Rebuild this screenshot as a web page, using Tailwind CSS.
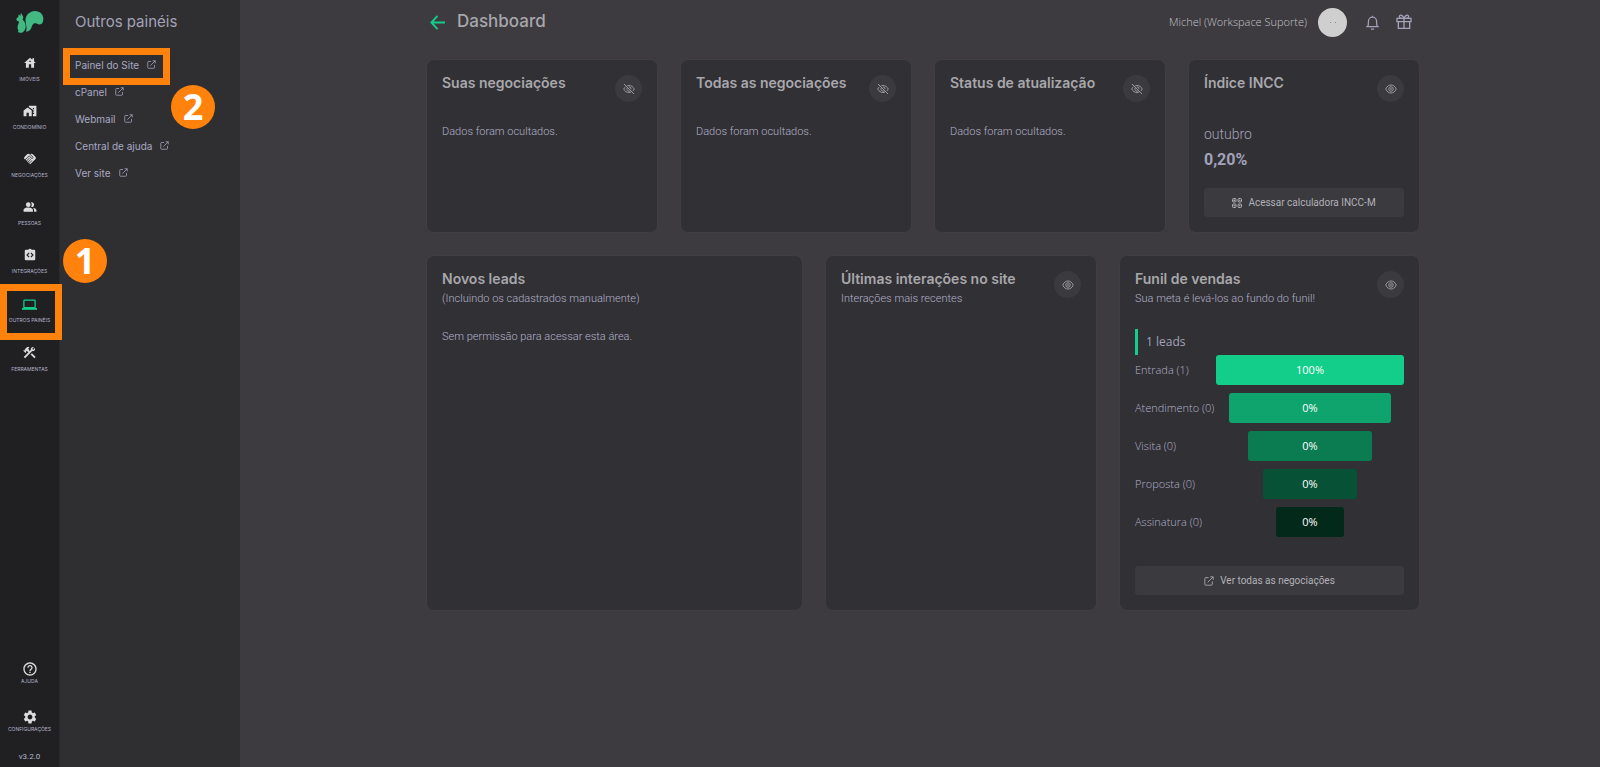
<!DOCTYPE html>
<html lang="pt-BR">

<head>
  <meta charset="UTF-8">
  <meta name="viewport" content="width=device-width, initial-scale=1.0">
  <title>Dashboard</title>
  <script src="https://cdn.jsdelivr.net/npm/@tailwindcss/browser@4"></script>
</head>

<body class="flex min-h-screen bg-[#3d3b40] font-[Roboto,sans-serif] text-[11px] text-[#a3a2b8]">
  <!-- shared icons -->
  <svg class="hidden">
    <symbol id="external" viewBox="0 0 24 24" fill="none" stroke="currentColor" stroke-width="2">
      <path d="M11 4H4a2 2 0 0 0-2 2v14a2 2 0 0 0 2 2h14a2 2 0 0 0 2-2v-7M9 15 22 2M15 2h7v7" />
    </symbol>
    <symbol id="eye" viewBox="0 0 24 24" fill="none" stroke="currentColor" stroke-width="2">
      <path d="M1.500 12C4 6 8 4 12 4s8 2 10.500 8C20 18 16 20 12 20S4 18 1.500 12z" />
      <circle cx="12" cy="12" r="4.500" />
      <circle cx="12" cy="12" r="1" />
    </symbol>
    <symbol id="eye-off" viewBox="0 0 24 24" fill="none" stroke="currentColor" stroke-width="2">
      <path d="M8.500 5.500A11 11 0 0 1 12 5c4.500 0 8.500 2.500 10.500 7a13 13 0 0 1-3 4.200M16 18.200a11 11 0 0 1-4 .8c-4.500 0-8.500-2.500-10.500-7a13 13 0 0 1 3.700-4.700M2 2l20 20M8.500 9.500a4.500 4.500 0 0 0 6.500 6M11.500 7.800a4.500 4.500 0 0 1 4.700 4.700" />
    </symbol>
  </svg>

  <nav class="flex w-[60px] shrink-0 flex-col border-r border-[#2a2a2c] bg-[#202022] font-[Inter,sans-serif] text-[5px] leading-[8px] uppercase text-[#b4b4cc]">
    <a href="#" aria-label="Início" class="flex h-12 justify-center pt-[10px]">
      <svg class="h-6 w-7" viewBox="47 30 84 72" fill="#42b883">
        <path d="M77 95C81 84 77 76 76 66 73 48 86 33 104 33c15 0 25 11 25 23 0 8-2 13-6 16-4 2-8 2-13-1-5-2-10-1-13 3-4 5-3 11-8 16-4 4-8 5-12 5z" />
        <path d="M62 38l4 8c4 4 3 9 1 13 6 5 10 13 9 22-1 8-5 15-11 17-6 1-10 0-12-2-1-2 1-2 2-3-3-5-4-10-3-15 1-5 4-9 4-13-2-2-6-2-8-5 0-5 3-7 6-9l1-8 5 4z" />
      </svg>
    </a>
    <a href="#" class="flex h-12 flex-col items-center gap-[5px] pt-[8px]">
      <svg class="size-[14px]" viewBox="0 0 24 24" fill="#dcdcdc"><path d="M19 9.300V4h-3v2.600L12 3 2 12h3v8h5v-6h4v6h5v-8h3l-3-2.700zm-9 .7c0-1.100.9-2 2-2s2 .9 2 2h-4z" /></svg>
      Imóveis
    </a>
    <a href="#" class="flex h-12 flex-col items-center gap-[5px] pt-[8px]">
      <svg class="size-[14px]" viewBox="0 0 24 24" fill="#dcdcdc"><path d="M1 11v10h5v-6h4v6h5V11L8 6z" /><path d="M10 3v1.970l7 5V11h2v2h-2v2h2v2h-2v4h6V3H10zm9 6h-2V7h2v2z" /></svg>
      Condomínio
    </a>
    <a href="#" class="flex h-12 flex-col items-center gap-[5px] pt-[8px]">
      <svg class="size-[14px]" viewBox="0 0 24 24" fill="#dcdcdc"><path d="M16.480 10.410c-.39.39-1.040.39-1.430 0l-4.470-4.460-7.050 7.040-.66-.63c-1.170-1.170-1.170-3.070 0-4.240l4.240-4.240c1.170-1.170 3.070-1.170 4.240 0L16.480 9c.39.39.39 1.020 0 1.410zm.7-2.120c.78.78.78 2.050 0 2.830-1.270 1.270-2.610.22-2.830 0l-3.760-3.760-5.570 5.570c-.39.39-.39 1.020 0 1.410s1.020.39 1.420 0l4.620-4.620.71.71-4.620 4.620c-.39.39-.39 1.020 0 1.410s1.020.39 1.420 0l4.620-4.620.71.71-4.620 4.620c-.39.39-.39 1.020 0 1.410s1.020.39 1.410 0l4.620-4.620.71.71-4.620 4.620c-.39.39-.39 1.020 0 1.410s1.020.39 1.410 0l8.320-8.340c1.170-1.170 1.170-3.070 0-4.240l-4.240-4.240c-1.150-1.150-3.010-1.170-4.180-.06l4.470 4.470z" /></svg>
      Negociações
    </a>
    <a href="#" class="flex h-12 flex-col items-center gap-[5px] pt-[8px]">
      <svg class="size-[14px]" viewBox="0 0 24 24" fill="#dcdcdc"><circle cx="9" cy="8" r="4" /><path d="M16.670 13.130C18.040 14.060 19 15.320 19 17v3h4v-3c0-2.180-3.570-3.470-6.330-3.870zM15 12c2.210 0 4-1.790 4-4s-1.790-4-4-4c-.47 0-.91.1-1.330.24C14.500 5.270 15 6.580 15 8s-.5 2.730-1.330 3.760c.42.14.86.24 1.330.24zM9 13c-2.670 0-8 1.340-8 4v3h16v-3c0-2.660-5.330-4-8-4z" /></svg>
      Pessoas
    </a>
    <a href="#" class="flex h-12 flex-col items-center gap-[5px] pt-[8px]">
      <svg class="size-[14px]" viewBox="0 0 24 24" fill="#dcdcdc"><path d="M5 3h4.200a3 3 0 0 1 5.600 0H19a2 2 0 0 1 2 2v14a2 2 0 0 1-2 2H5a2 2 0 0 1-2-2V5a2 2 0 0 1 2-2z" /><path d="M10.500 8.500 7 12l3.500 3.500M13.500 8.500 17 12l-3.500 3.500" fill="none" stroke="#202022" stroke-width="2" /></svg>
      Integrações
    </a>
    <a href="#" class="relative flex h-12 flex-col items-center gap-[4px] pt-[9px]">
      <svg class="size-[15px]" viewBox="0 0 24 24" fill="none" stroke="#12ce8a" stroke-width="2"><rect x="3" y="5" width="18" height="12" rx="1" /><path d="M0 19h24" stroke-width="3" /></svg>
      Outros painéis
      <!-- step 1 marker -->
      <span class="absolute -top-1 left-0 h-14 w-[62px] border-[7px] border-[#ff820c]"></span>
      <span class="absolute -top-[49px] left-[63px] flex size-11 items-center justify-center rounded-full bg-[#ff820c] font-['Open_Sans',sans-serif] text-[36px] font-bold text-white">1</span>
    </a>
    <a href="#" class="flex h-12 flex-col items-center gap-[5px] pt-[9px]">
      <svg class="size-[15px]" viewBox="0 0 24 24" fill="#dcdcdc"><path d="M13.780 15.170l2.120-2.120 6 6-2.120 2.120z" /><path d="M17.500 10c1.930 0 3.500-1.570 3.500-3.500 0-.58-.16-1.120-.41-1.600l-2.700 2.700-1.490-1.490 2.700-2.700c-.48-.25-1.020-.41-1.600-.41C15.570 3 14 4.570 14 6.500c0 .41.08.8.21 1.160l-1.850 1.850-1.780-1.780.71-.71-1.410-1.410L12 3.490c-1.170-1.170-3.070-1.170-4.240 0L4.220 7.030l1.410 1.410H2.810l-.71.71 3.540 3.540.71-.71V9.150l1.410 1.410.71-.71 1.780 1.780-7.410 7.410 2.120 2.120L16.340 9.790c.36.13.75.21 1.160.21z" /></svg>
      Ferramentas
    </a>

    <div class="mt-auto flex flex-col">
      <a href="#" class="flex h-12 flex-col items-center">
        <svg class="size-4" viewBox="0 0 24 24" fill="#dcdcdc"><path d="M11 18h2v-2h-2v2zm1-16C6.480 2 2 6.480 2 12s4.480 10 10 10 10-4.480 10-10S17.520 2 12 2zm0 18c-4.410 0-8-3.590-8-8s3.590-8 8-8 8 3.590 8 8-3.590 8-8 8zm0-14c-2.210 0-4 1.790-4 4h2c0-1.100.9-2 2-2s2 .9 2 2c0 2-3 1.750-3 5h2c0-2.250 3-2.500 3-5 0-2.210-1.790-4-4-4z" /></svg>
        Ajuda
      </a>
      <a href="#" class="flex h-[42px] flex-col items-center">
        <svg class="size-4" viewBox="0 0 24 24" fill="#dcdcdc"><path d="M19.140 12.940c.04-.3.06-.61.06-.94 0-.32-.02-.64-.07-.94l2.030-1.580c.18-.14.23-.41.12-.61l-1.920-3.320c-.12-.22-.37-.29-.59-.22l-2.390.96c-.5-.38-1.030-.7-1.620-.94l-.36-2.540c-.04-.24-.24-.41-.48-.41h-3.840c-.24 0-.43.17-.47.41l-.36 2.540c-.59.24-1.130.57-1.620.94l-2.390-.96c-.22-.08-.47 0-.59.22L2.740 8.870c-.12.21-.08.47.12.61l2.030 1.580c-.05.3-.09.63-.09.94s.02.64.07.94l-2.030 1.580c-.18.14-.23.41-.12.61l1.920 3.320c.12.22.37.29.59.22l2.390-.96c.5.38 1.030.7 1.620.94l.36 2.540c.05.24.24.41.48.41h3.840c.24 0 .44-.17.47-.41l.36-2.540c.59-.24 1.130-.56 1.620-.94l2.390.96c.22.08.47 0 .59-.22l1.920-3.320c.12-.22.07-.47-.12-.61l-2.010-1.580zM12 15.600c-1.980 0-3.600-1.620-3.600-3.600s1.620-3.600 3.600-3.600 3.600 1.620 3.600 3.600-1.620 3.600-3.600 3.600z" /></svg>
        Configurações
      </a>
      <span class="pb-1 text-center font-[Roboto,sans-serif] text-[8px] leading-[12px] normal-case">v3.2.0</span>
    </div>
  </nav>

  <aside class="w-[180px] shrink-0 bg-[#2f2f31] px-[15px] font-[Inter,sans-serif]">
    <h2 class="flex h-11 items-center text-[15px]">Outros painéis</h2>
    <ul class="mt-[8px] text-[10px] text-[#a9a8c4]">
      <li class="relative">
        <a href="#" class="flex h-[27px] items-center gap-2">Painel do Site <svg class="mb-[3px] size-[9px]"><use href="#external" /></svg></a>
        <!-- step 2 marker -->
        <span class="absolute -top-1 -left-3 h-[37px] w-[107px] border-[7px] border-[#ff820c]"></span>
        <span class="absolute top-[33px] left-24 flex size-11 items-center justify-center rounded-full bg-[#ff820c] font-['Open_Sans',sans-serif] text-[36px] font-bold text-white">2</span>
      </li>
      <li><a href="#" class="flex h-[27px] items-center gap-2">cPanel <svg class="mb-[3px] size-[9px]"><use href="#external" /></svg></a></li>
      <li><a href="#" class="flex h-[27px] items-center gap-2">Webmail <svg class="mb-[3px] size-[9px]"><use href="#external" /></svg></a></li>
      <li><a href="#" class="flex h-[27px] items-center gap-2">Central de ajuda <svg class="mb-[3px] size-[9px]"><use href="#external" /></svg></a></li>
      <li><a href="#" class="flex h-[27px] items-center gap-2">Ver site <svg class="mb-[3px] size-[9px]"><use href="#external" /></svg></a></li>
    </ul>
  </aside>

  <main class="min-w-0 flex-1 pl-[6px]">
    <div class="mx-auto max-w-[992px]">
      <header class="flex h-11 items-center pr-[7px]">
        <a href="#" aria-label="Voltar" class="pl-[3px]">
          <svg class="size-[15px]" viewBox="0 0 16 16" fill="none" stroke="#12ce8a" stroke-width="2"><path d="M16 8H2M8 1 1.500 8 8 15" /></svg>
        </a>
        <h1 class="ml-3 text-[17px] font-[Inter,sans-serif] font-medium text-[#a8a7ab]">Dashboard</h1>
        <span class="ml-auto font-['Open_Sans',sans-serif] text-[11px] font-light text-[#c4c3ca]">Michel (Workspace Suporte)</span>
        <span class="ml-[11px] flex size-[29px] items-center justify-center gap-1 rounded-full bg-[#cfcfcf]">
          <i class="size-px bg-[#888]"></i><i class="size-px bg-[#888]"></i>
        </span>
        <button aria-label="Notificações" class="ml-[18px]">
          <svg class="size-[15px]" viewBox="0 0 24 24" fill="none" stroke="currentColor" stroke-width="2"><path d="M2 18.500h20M4.500 18c1-2 1-4 1-8a6.500 6.500 0 0 1 13 0c0 4 0 6 1 8M9.500 22.500h5M12 1v2.500" /></svg>
        </button>
        <button aria-label="Novidades" class="ml-4">
          <svg class="size-4" viewBox="0 0 24 24" fill="none" stroke="currentColor" stroke-width="2"><path d="M1.500 6.500h21v5h-21zM3.500 11.500v10h17v-10M12 6.500v15M12 6.500C10 1 5 .5 5 4c0 2 3 2.500 7 2.500C14 1 19 .5 19 4c0 2-3 2.500-7 2.500z" /></svg>
        </button>
      </header>

      <div class="-mx-px mt-[15px] grid grid-cols-4 gap-[22px]">
        <section class="min-h-[174px] rounded-lg border border-[#403e43] bg-[#313035] p-[15px]">
          <div class="flex items-start justify-between">
            <h2 class="font-[Inter,sans-serif] text-[14px] leading-[16px] font-semibold text-[#a8a7ab]">Suas negociações</h2>
            <button aria-label="Mostrar" class="flex size-[27px] items-center justify-center rounded-full bg-[#3b3a3e] text-[#9a999f]"><svg class="size-3"><use href="#eye-off" /></svg></button>
          </div>
          <p class="mt-[22px] leading-[16px] font-light text-[#b2b1c8]">Dados foram ocultados.</p>
        </section>
        <section class="min-h-[174px] rounded-lg border border-[#403e43] bg-[#313035] p-[15px]">
          <div class="flex items-start justify-between">
            <h2 class="font-[Inter,sans-serif] text-[14px] leading-[16px] font-semibold text-[#a8a7ab]">Todas as negociações</h2>
            <button aria-label="Mostrar" class="flex size-[27px] items-center justify-center rounded-full bg-[#3b3a3e] text-[#9a999f]"><svg class="size-3"><use href="#eye-off" /></svg></button>
          </div>
          <p class="mt-[22px] leading-[16px] font-light text-[#b2b1c8]">Dados foram ocultados.</p>
        </section>
        <section class="min-h-[174px] rounded-lg border border-[#403e43] bg-[#313035] p-[15px]">
          <div class="flex items-start justify-between">
            <h2 class="font-[Inter,sans-serif] text-[14px] leading-[16px] font-semibold text-[#a8a7ab]">Status de atualização</h2>
            <button aria-label="Mostrar" class="flex size-[27px] items-center justify-center rounded-full bg-[#3b3a3e] text-[#9a999f]"><svg class="size-3"><use href="#eye-off" /></svg></button>
          </div>
          <p class="mt-[22px] leading-[16px] font-light text-[#b2b1c8]">Dados foram ocultados.</p>
        </section>
        <section class="flex min-h-[174px] flex-col rounded-lg border border-[#403e43] bg-[#313035] p-[15px]">
          <div class="flex items-start justify-between">
            <h2 class="font-[Inter,sans-serif] text-[14px] leading-[16px] font-semibold text-[#a8a7ab]">Índice INCC</h2>
            <button aria-label="Ocultar" class="flex size-[27px] items-center justify-center rounded-full bg-[#3b3a3e] text-[#9a999f]"><svg class="size-3"><use href="#eye" /></svg></button>
          </div>
          <p class="mt-[22px] text-[14px] leading-[20px] font-light">outubro</p>
          <p class="mt-[6px] text-[16px] leading-[20px] font-bold">0,20%</p>
          <button class="mt-auto flex h-[29px] items-center justify-center gap-[6px] rounded-[3px] bg-[#3b3a3e] text-[10px] text-[#b2b1b8]">
            <svg class="size-[10px]" viewBox="0 0 20 20" fill="none" stroke="currentColor" stroke-width="2"><rect x="1" y="1" width="7" height="7" rx="2" /><rect x="12" y="1" width="7" height="7" rx="2" /><rect x="1" y="12" width="7" height="7" rx="2" /><rect x="12" y="12" width="7" height="7" rx="2" /><path d="M4.500 3v3M3 4.500h3M14 4.500h3M3 15.500h3M14 15.500h3" /></svg>
            Acessar calculadora INCC-M
          </button>
        </section>
      </div>

      <div class="-mx-px mt-[22px] grid grid-cols-[377fr_272fr_301fr] gap-[22px] pb-6">
        <section class="min-h-[356px] rounded-lg border border-[#403e43] bg-[#313035] p-[15px]">
          <h2 class="font-[Inter,sans-serif] text-[14px] leading-[16px] font-semibold text-[#a8a7ab]">Novos leads</h2>
          <p class="mt-1 leading-[16px] font-light text-[#b2b1c8]">(Incluindo os cadastrados manualmente)</p>
          <p class="mt-[22px] leading-[16px] font-light text-[#b2b1c8]">Sem permissão para acessar esta área.</p>
        </section>
        <section class="rounded-lg border border-[#403e43] bg-[#313035] p-[15px]">
          <div class="flex items-start justify-between">
            <div>
              <h2 class="font-[Inter,sans-serif] text-[14px] leading-[16px] font-semibold text-[#a8a7ab]">Últimas interações no site</h2>
              <p class="mt-1 leading-[16px] font-light text-[#b2b1c8]">Interações mais recentes</p>
            </div>
            <button aria-label="Ocultar" class="flex size-[27px] items-center justify-center rounded-full bg-[#3b3a3e] text-[#9a999f]"><svg class="size-3"><use href="#eye" /></svg></button>
          </div>
        </section>
        <section class="flex flex-col rounded-lg border border-[#403e43] bg-[#313035] p-[15px]">
          <div class="flex items-start justify-between">
            <div>
              <h2 class="font-[Inter,sans-serif] text-[14px] leading-[16px] font-semibold text-[#a8a7ab]">Funil de vendas</h2>
              <p class="mt-1 leading-[16px] font-light text-[#b2b1c8]">Sua meta é levá-los ao fundo do funil!</p>
            </div>
            <button aria-label="Ocultar" class="flex size-[27px] items-center justify-center rounded-full bg-[#3b3a3e] text-[#9a999f]"><svg class="size-3"><use href="#eye" /></svg></button>
          </div>
          <p class="mt-[22px] border-l-[3px] border-[#12ce8a] pl-2 font-['Open_Sans',sans-serif] text-[12px] leading-[26px] font-medium">1 leads</p>
          <dl class="grid grid-cols-[81px_1fr] items-center gap-y-2 font-['Open_Sans',sans-serif] text-[11px]">
            <dt class="font-light whitespace-nowrap text-[#b2b1c8]">Entrada (1)</dt>
            <dd class="flex h-[30px] items-center justify-center justify-self-center rounded-[3px] bg-[#12ce8a] text-white" style="width:100%">100%</dd>
            <dt class="font-light whitespace-nowrap text-[#b2b1c8]">Atendimento (0)</dt>
            <dd class="flex h-[30px] items-center justify-center justify-self-center rounded-[3px] bg-[#0fa36e] text-white" style="width:86%">0%</dd>
            <dt class="font-light whitespace-nowrap text-[#b2b1c8]">Visita (0)</dt>
            <dd class="flex h-[30px] items-center justify-center justify-self-center rounded-[3px] bg-[#0b7b52] text-white" style="width:66%">0%</dd>
            <dt class="font-light whitespace-nowrap text-[#b2b1c8]">Proposta (0)</dt>
            <dd class="flex h-[30px] items-center justify-center justify-self-center rounded-[3px] bg-[#075237] text-white" style="width:50%">0%</dd>
            <dt class="font-light whitespace-nowrap text-[#b2b1c8]">Assinatura (0)</dt>
            <dd class="flex h-[30px] items-center justify-center justify-self-center rounded-[3px] bg-[#03291b] text-white" style="width:36%">0%</dd>
          </dl>
          <button class="mt-auto flex h-[29px] items-center justify-center gap-[6px] rounded-[3px] bg-[#3b3a3e] text-[10px] text-[#b2b1b8]">
            <svg class="size-[10px]"><use href="#external" /></svg>
            Ver todas as negociações
          </button>
        </section>
      </div>
    </div>
  </main>
</body>

</html>
